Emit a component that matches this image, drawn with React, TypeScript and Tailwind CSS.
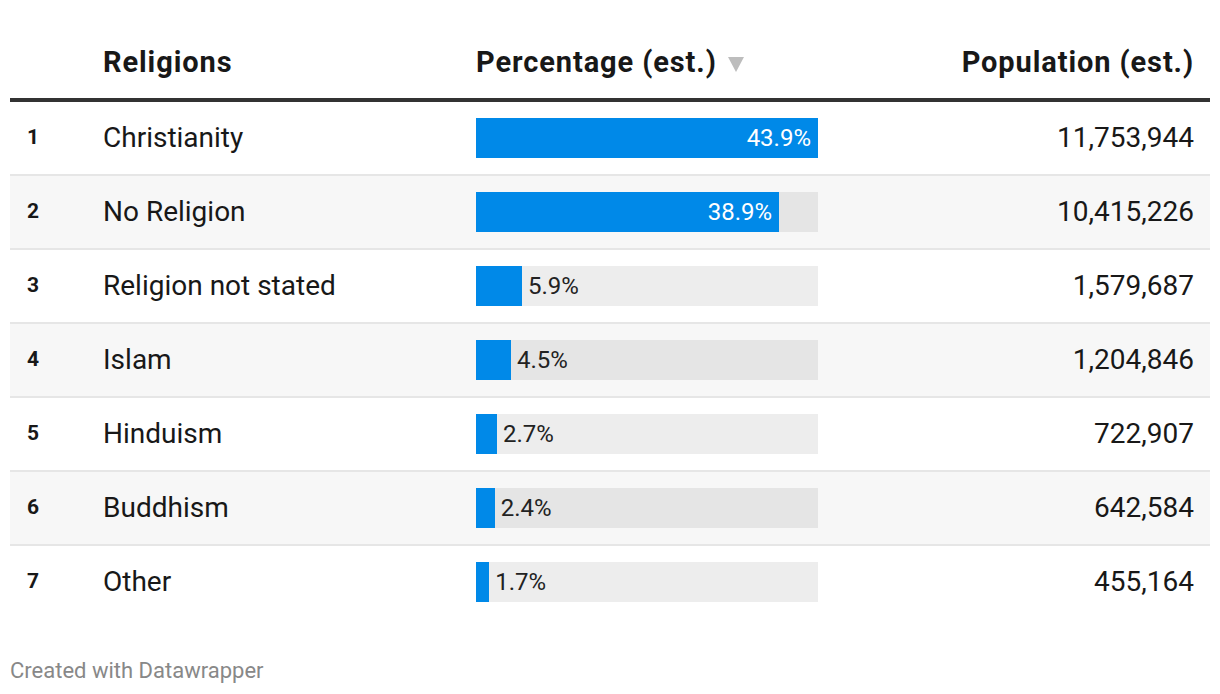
import React from 'react';

const rows = [
  { rank: 1, name: 'Christianity', pct: 43.9, pop: '11,753,944' },
  { rank: 2, name: 'No Religion', pct: 38.9, pop: '10,415,226' },
  { rank: 3, name: 'Religion not stated', pct: 5.9, pop: '1,579,687' },
  { rank: 4, name: 'Islam', pct: 4.5, pop: '1,204,846' },
  { rank: 5, name: 'Hinduism', pct: 2.7, pop: '722,907' },
  { rank: 6, name: 'Buddhism', pct: 2.4, pop: '642,584' },
  { rank: 7, name: 'Other', pct: 1.7, pop: '455,164' },
];

const MAX = 43.9;

function Bar({ pct }: { pct: number }) {
  const inside = pct > 20;
  return (
    <div className="relative h-10 w-[342px] bg-black/[0.07]">
      <div className="h-full bg-[#0089e8]" style={{ width: `${(pct / MAX) * 100}%` }}>
        {inside && (
          <span className="flex h-full items-center justify-end pr-[7px] text-[24px] text-white">{pct}%</span>
        )}
      </div>
      {!inside && (
        <span
          className="absolute top-0 flex h-full items-center pl-[6px] text-[24px] text-[#222]"
          style={{ left: `${(pct / MAX) * 100}%` }}
        >
          {pct}%
        </span>
      )}
    </div>
  );
}

export default function App() {
  return (
    <div className="min-h-screen bg-white px-[10px] pt-[28px] font-['Roboto',sans-serif] text-[#181818]">
      <div className="grid h-[74px] grid-cols-[93px_373px_342px_1fr] items-center border-b-4 border-[#333] text-[29px] font-bold tracking-[0.9px]">
        <div />
        <div>Religions</div>
        <div className="flex items-center whitespace-nowrap">
          Percentage (est.)
          <svg className="ml-[11px] mt-[3px]" width="16" height="15" viewBox="0 0 16 15">
            <polygon points="0,0 16,0 8,15" fill="#bdbdbd" />
          </svg>
        </div>
        <div className="pr-4 text-right">Population (est.)</div>
      </div>

      {rows.map((r, i) => (
        <div
          key={r.rank}
          className={`grid grid-cols-[93px_373px_342px_1fr] items-center ${
            i % 2 === 1 ? 'bg-[#f7f7f7]' : 'bg-white'
          } ${i < rows.length - 1 ? 'h-[74px] border-b-2 border-[#e6e6e6]' : 'h-[72px]'}`}
        >
          <div className="pl-[17px] text-[21px] font-bold">{r.rank}</div>
          <div className="text-[28px]">{r.name}</div>
          <Bar pct={r.pct} />
          <div className="pr-4 text-right text-[28px]">{r.pop}</div>
        </div>
      ))}

      <div className="mt-[36px] text-[22px] text-[#888]">Created with Datawrapper</div>
    </div>
  );
}
